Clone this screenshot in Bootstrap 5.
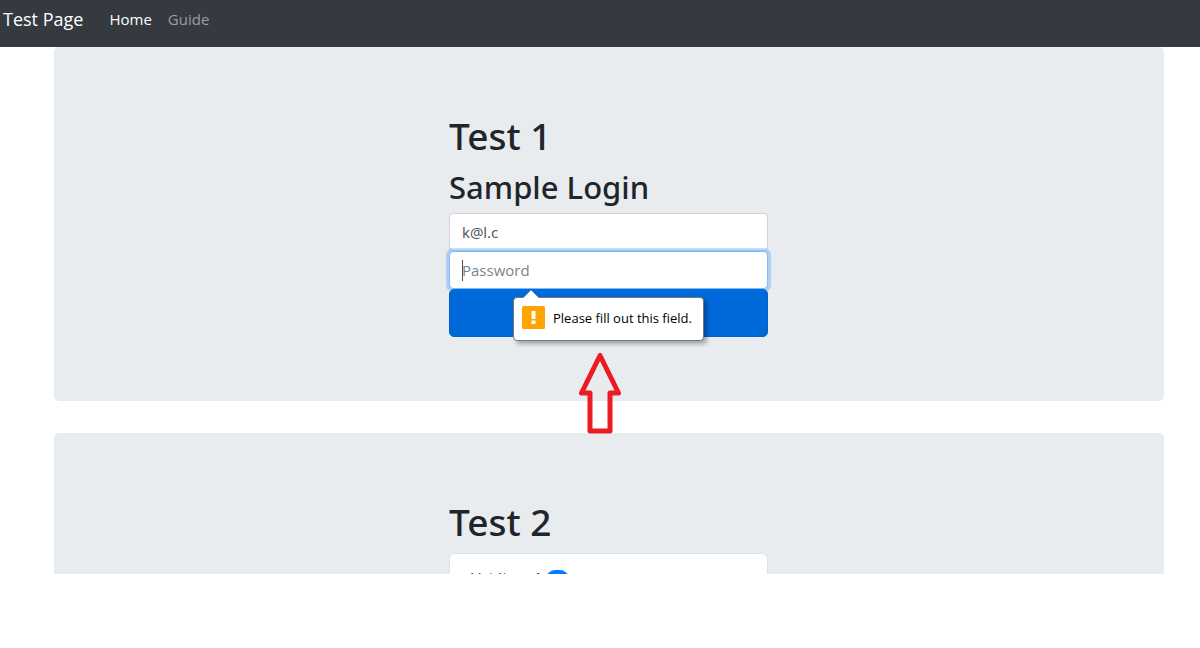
<!DOCTYPE html>
<html lang="en">
<head>
<meta charset="utf-8">
<meta name="viewport" content="width=device-width, initial-scale=1">
<title>Test Page</title>
<link href="https://cdn.jsdelivr.net/npm/bootstrap@5.3.0/dist/css/bootstrap.min.css" rel="stylesheet">
<style>
  body { font-family: "Open Sans", "Noto Sans", sans-serif; font-size: 15px; padding-bottom: 74px; color: #212529; }
  .navbar { background: #343a40; height: 47px; padding: 0 3px 8px; }
  .navbar-brand { font-size: 18px; margin-right: 18px; }
  .navbar .nav-link { font-size: 15px; color: rgba(255, 255, 255, .5); }
  .navbar .nav-link.active { color: #fff; }
  .page-body { padding: 0 36px 0 54px; }
  .panel { background: #e8ecef; border-radius: 5px; padding: 64px 33px 64px 32px; margin-bottom: 32px; }
  .panel-inner { width: 319px; max-width: 100%; margin: 0 auto; }
  h1, h2 { font-family: "Noto Sans", "Open Sans", sans-serif; font-weight: 500; }
  h1 { font-size: 37px; line-height: 50px; margin-bottom: 6px; }
  h2 { font-size: 31px; line-height: 40px; margin-bottom: 6px; }
  .login .form-control { height: 38px; font-size: 15px; color: #495057; border-color: #ced4da; border-radius: 4px; caret-color: transparent; }
  .login .form-control::placeholder { color: #7b848c; }
  .login .form-control:focus { border-color: #80bdff; box-shadow: 0 0 0 3px rgba(0, 123, 255, .25); }
  .login .btn { height: 48px; background: #0069d9; border-color: #0062cc; border-radius: 5px; }
  .caret { position: absolute; left: 13px; top: 9px; width: 1px; height: 21px; background: #495057; z-index: 6; }
  .hint { position: absolute; top: 100%; left: 64px; min-width: 191px; margin-top: 8px; height: 44px; padding: 0 8px; background: #fff; border: 1px solid #777; border-radius: 4px; box-shadow: 3px 3px 4px rgba(0, 0, 0, .3); font-size: 13px; color: #000; z-index: 5; }
  .hint-icon { margin-bottom: 4px; }
  .hint-tip { position: absolute; left: 8px; top: -9px; }
  .pointer { position: absolute; left: 130px; top: 100%; margin-top: 16px; z-index: 4; }
  .list-group-item { padding: 12px 20px; line-height: 22px; }
  .list-group-item .badge { background: #007bff; font-size: 12px; padding: 3px 8px; }
</style>
</head>
<body class="d-flex flex-column vh-100 overflow-hidden">
<div class="flex-grow-1 overflow-hidden">
  <nav class="navbar navbar-expand navbar-dark">
    <a class="navbar-brand" href="#">Test Page</a>
    <ul class="navbar-nav me-auto">
      <li class="nav-item"><a class="nav-link active" href="#">Home</a></li>
      <li class="nav-item"><a class="nav-link" href="#">Guide</a></li>
    </ul>
  </nav>
  <main class="page-body">
    <section class="panel">
      <div class="panel-inner">
        <h1>Test 1</h1>
        <h2>Sample Login</h2>
        <form class="login position-relative">
          <input class="form-control" type="email" value="k@l.c" aria-label="Email">
          <div class="position-relative">
            <input class="form-control" type="password" placeholder="Password" aria-label="Password" required autofocus>
            <span class="caret" aria-hidden="true"></span>
            <div class="hint d-flex align-items-center gap-2 text-nowrap" role="alert">
              <svg class="hint-tip" width="18" height="10" viewBox="0 0 18 10" aria-hidden="true"><path d="M0 10 9 1l9 9z" fill="#fff"/><path d="M1 9 9 1l8 8" fill="none" stroke="#777" stroke-width=".5"/></svg>
              <svg class="hint-icon" width="23" height="23" viewBox="0 0 23 23" aria-hidden="true"><rect width="23" height="23" rx="1.5" fill="#ffa400"/><path d="M9.5 5h4v8h-4zM9.5 14.5h4V18h-4z" fill="#fff"/></svg>
              <span>Please fill out this field.</span>
            </div>
          </div>
          <button class="btn btn-primary d-block w-100" type="submit" aria-label="Sign in"></button>
          <svg class="pointer" width="42" height="81" viewBox="0 0 42 81" aria-hidden="true"><path d="M21 2.5 2.5 40H11v38h20V40h8.5z" fill="none" stroke="#ed1c24" stroke-width="5" stroke-linejoin="round"/></svg>
        </form>
      </div>
    </section>
    <section class="panel">
      <div class="panel-inner">
        <h1>Test 2</h1>
        <ul class="list-group">
          <li class="list-group-item">List Item 1 <span class="badge rounded-pill">3</span></li>
        </ul>
      </div>
    </section>
  </main>
</div>
<script src="https://cdn.jsdelivr.net/npm/bootstrap@5.3.0/dist/js/bootstrap.bundle.min.js"></script>
<script>document.querySelector('[autofocus]').focus();</script>
</body>
</html>
